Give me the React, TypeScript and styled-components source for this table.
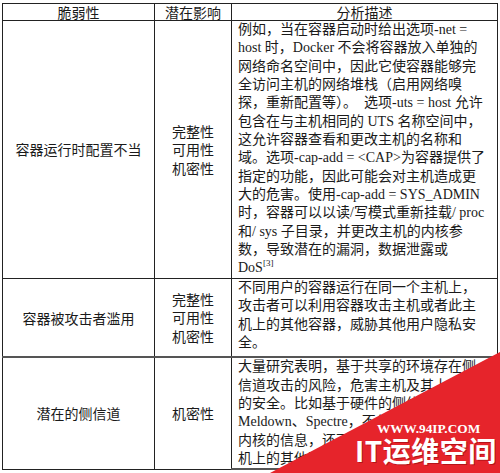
import React from "react";
import styled, { createGlobalStyle } from "styled-components";

const GlobalStyle = createGlobalStyle`
  html, body {
    margin: 0;
    padding: 0;
    background: #fff;
  }
`;

const Page = styled.div`
  position: relative;
  width: 500px;
  height: 473px;
  overflow: hidden;
  background: #fff;
  padding-top: 3px;
  box-sizing: border-box;
`;

const Table = styled.table`
  margin-left: 2px;
  width: 496px;
  border-collapse: collapse;
  table-layout: fixed;
  color: #1a1a1a;
`;

const HeadCell = styled.th`
  height: 16px;
  padding: 0;
  border: 1px solid #222;
  font-family: "Noto Sans CJK SC", sans-serif;
  font-weight: 400;
  font-size: 14px;
  line-height: 16px;
  text-align: center;
`;

const Row = styled.tr<{ $thick?: boolean }>`
  & > td {
    border-top: ${(p) => (p.$thick ? "2px solid #555" : "1px solid #222")};
  }
`;

const NameCell = styled.td`
  border: 1px solid #222;
  padding: 0;
  font-family: "Noto Sans CJK SC", sans-serif;
  font-size: 14px;
  line-height: 18px;
  text-align: center;
  vertical-align: middle;
`;

const ImpactCell = styled(NameCell)`
  line-height: 18.4px;
`;

const DescCell = styled.td<{ $padBottom?: number; $last?: boolean }>`
  border: 1px solid #222;
  border-bottom: ${(p) => (p.$last ? "2px solid #555" : "1px solid #222")};
  padding: 0 2px ${(p) => p.$padBottom ?? 0}px 6px;
  font-family: "Liberation Serif", "Noto Sans CJK SC", serif;
  font-size: 14px;
  line-height: 18.35px;
  vertical-align: top;
  overflow: hidden;
`;

const Line = styled.div`
  white-space: pre;
`;

const Sup = styled.sup`
  font-size: 9px;
  line-height: 0;
`;

const Ribbon = styled.div`
  position: absolute;
  inset: 0;
  background: #e6242b;
  clip-path: polygon(500px 352px, 500px 473px, 270px 473px);
`;

const SiteMark = styled.div`
  position: absolute;
  left: 377px;
  top: 422px;
  font-family: "Liberation Serif", serif;
  font-weight: 700;
  font-size: 13.3px;
  line-height: 1;
  color: #fff;
`;

const BrandMark = styled.div`
  position: absolute;
  left: 355px;
  top: 436px;
  font-family: "Noto Sans CJK SC", sans-serif;
  font-weight: 700;
  font-size: 28px;
  line-height: 1;
  letter-spacing: 0.5px;
  color: #fff;
  text-shadow: 1px 1px 0 rgba(120, 0, 0, 0.45);
`;

const rowOne = [
  "例如，当在容器启动时给出选项-net =",
  "host 时，Docker 不会将容器放入单独的",
  "网络命名空间中，因此它使容器能够完",
  "全访问主机的网络堆栈（启用网络嗅",
  "探，重新配置等）。  选项-uts = host 允许",
  "包含在与主机相同的 UTS 名称空间中，",
  "这允许容器查看和更改主机的名称和",
  "域。选项-cap-add = <CAP>为容器提供了",
  "指定的功能，因此可能会对主机造成更",
  "大的危害。使用-cap-add = SYS_ADMIN",
  "时，容器可以以读/写模式重新挂载/ proc",
  "和/ sys 子目录，并更改主机的内核参",
  "数，导致潜在的漏洞，数据泄露或",
];

const rowTwo = [
  "不同用户的容器运行在同一个主机上，",
  "攻击者可以利用容器攻击主机或者此主",
  "机上的其他容器，威胁其他用户隐私安",
  "全。",
];

const rowThree = [
  "大量研究表明，基于共享的环境存在侧",
  "信道攻击的风险，危害主机及其上容器",
  "的安全。比如基于硬件的侧信道攻击",
  "Meldown、Spectre，不仅可以获取主机",
  "内核的信息，还可以获取同一个主",
  "机上的其他容器的信息。",
];

function Impact({ items }: { items: string[] }) {
  return (
    <ImpactCell>
      {items.map((t) => (
        <div key={t}>{t}</div>
      ))}
    </ImpactCell>
  );
}

export default function App() {
  return (
    <Page>
      <GlobalStyle />
      <Table>
        <colgroup>
          <col style={{ width: 152 }} />
          <col style={{ width: 77 }} />
          <col />
        </colgroup>
        <thead>
          <tr>
            <HeadCell>脆弱性</HeadCell>
            <HeadCell>潜在影响</HeadCell>
            <HeadCell>分析描述</HeadCell>
          </tr>
        </thead>
        <tbody>
          <Row>
            <NameCell>容器运行时配置不当</NameCell>
            <Impact items={["完整性", "可用性", "机密性"]} />
            <DescCell>
              {rowOne.map((l) => (
                <Line key={l}>{l}</Line>
              ))}
              <Line>
                DoS<Sup>[3]</Sup>
              </Line>
            </DescCell>
          </Row>
          <Row>
            <NameCell>容器被攻击者滥用</NameCell>
            <Impact items={["完整性", "可用性", "机密性"]} />
            <DescCell $padBottom={4}>
              {rowTwo.map((l) => (
                <Line key={l}>{l}</Line>
              ))}
            </DescCell>
          </Row>
          <Row $thick>
            <NameCell>潜在的侧信道</NameCell>
            <Impact items={["机密性"]} />
            <DescCell $last>
              {rowThree.map((l) => (
                <Line key={l}>{l}</Line>
              ))}
            </DescCell>
          </Row>
        </tbody>
      </Table>
      <Ribbon />
      <SiteMark>WWW.94IP.COM</SiteMark>
      <BrandMark>IT运维空间</BrandMark>
    </Page>
  );
}
